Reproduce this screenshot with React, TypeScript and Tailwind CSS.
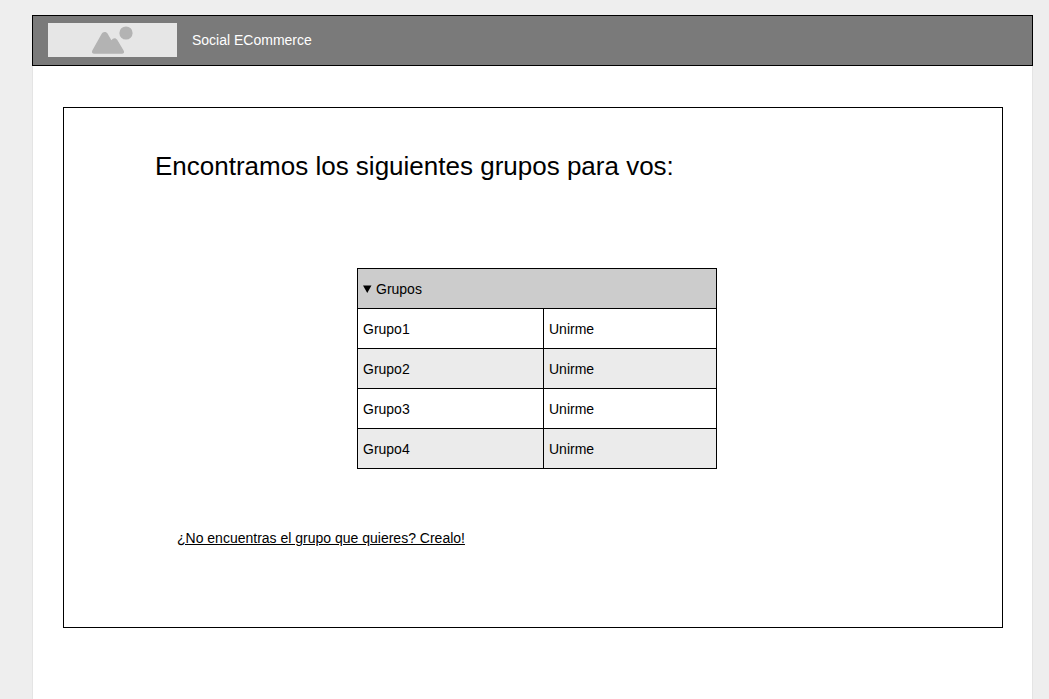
import { useState } from "react";

const groups = ["Grupo1", "Grupo2", "Grupo3", "Grupo4"];

function LogoPlaceholder() {
  return (
    <div className="flex h-[34px] w-[129px] items-center justify-center bg-[#e6e6e6]">
      <svg
        width="43"
        height="34"
        viewBox="0 0 43 34"
        fill="#b3b3b3"
        role="img"
        aria-label="Logo"
      >
        <circle cx="35" cy="10" r="6.6" />
        <path d="M1.3 27.6 10.4 11.3C11.8 8.5 15.2 8.4 16.8 11L20.4 17.2C22 14.7 24.8 14.5 26.2 16.8L32.6 27.6C33.8 29.6 32.8 30.8 31 30.8H3.4C1.2 30.8.4 29.4 1.3 27.6Z" />
      </svg>
    </div>
  );
}

function GroupTable() {
  const [open, setOpen] = useState(true);

  return (
    <table className="w-[360px] table-fixed border-collapse border border-black text-left text-sm">
      <colgroup>
        <col className="w-[186px]" />
        <col />
      </colgroup>
      <thead>
        <tr className="h-10 bg-[#cccccc]">
          <th colSpan={2} className="border border-black px-[5px] font-normal">
            <button
              type="button"
              aria-expanded={open}
              onClick={() => setOpen(!open)}
              className="flex items-center gap-1"
            >
              <svg
                width="9"
                height="8"
                viewBox="0 0 9 8"
                className={open ? "" : "-rotate-90"}
                aria-hidden="true"
              >
                <path d="M0 .5h8.5L4.25 8z" />
              </svg>
              Grupos
            </button>
          </th>
        </tr>
      </thead>
      {open && (
        <tbody>
          {groups.map((name) => (
            <tr key={name} className="h-10 even:bg-[#ebebeb]">
              <td className="border border-black px-[5px]">{name}</td>
              <td className="border border-black px-[5px]">
                <button type="button">Unirme</button>
              </td>
            </tr>
          ))}
        </tbody>
      )}
    </table>
  );
}

export default function App() {
  return (
    <div className="flex min-h-screen flex-col bg-[#eeeeee] pt-[15px] pr-4 pl-8 font-['Liberation_Sans',Arial,sans-serif] text-black">
      <header className="flex items-center gap-[15px] border border-black bg-[#7a7a7a] px-[15px] pt-[7px] pb-2 text-sm text-white">
        <LogoPlaceholder />
        <span>Social ECommerce</span>
      </header>
      <main className="grow border-x border-[#e4e4e4] bg-white pt-[41px] pr-[29px] pb-10 pl-[30px]">
        <section className="border border-black pt-[42px] pb-[79px]">
          <h1 className="pl-[91px] text-[26px] leading-8">
            Encontramos los siguientes grupos para vos:
          </h1>
          <div className="flex justify-center pt-[86px] pl-2">
            <GroupTable />
          </div>
          <p className="pt-[59px] pl-[113px] text-sm">
            <a href="#crear" className="underline">
              ¿No encuentras el grupo que quieres? Crealo!
            </a>
          </p>
        </section>
      </main>
    </div>
  );
}
